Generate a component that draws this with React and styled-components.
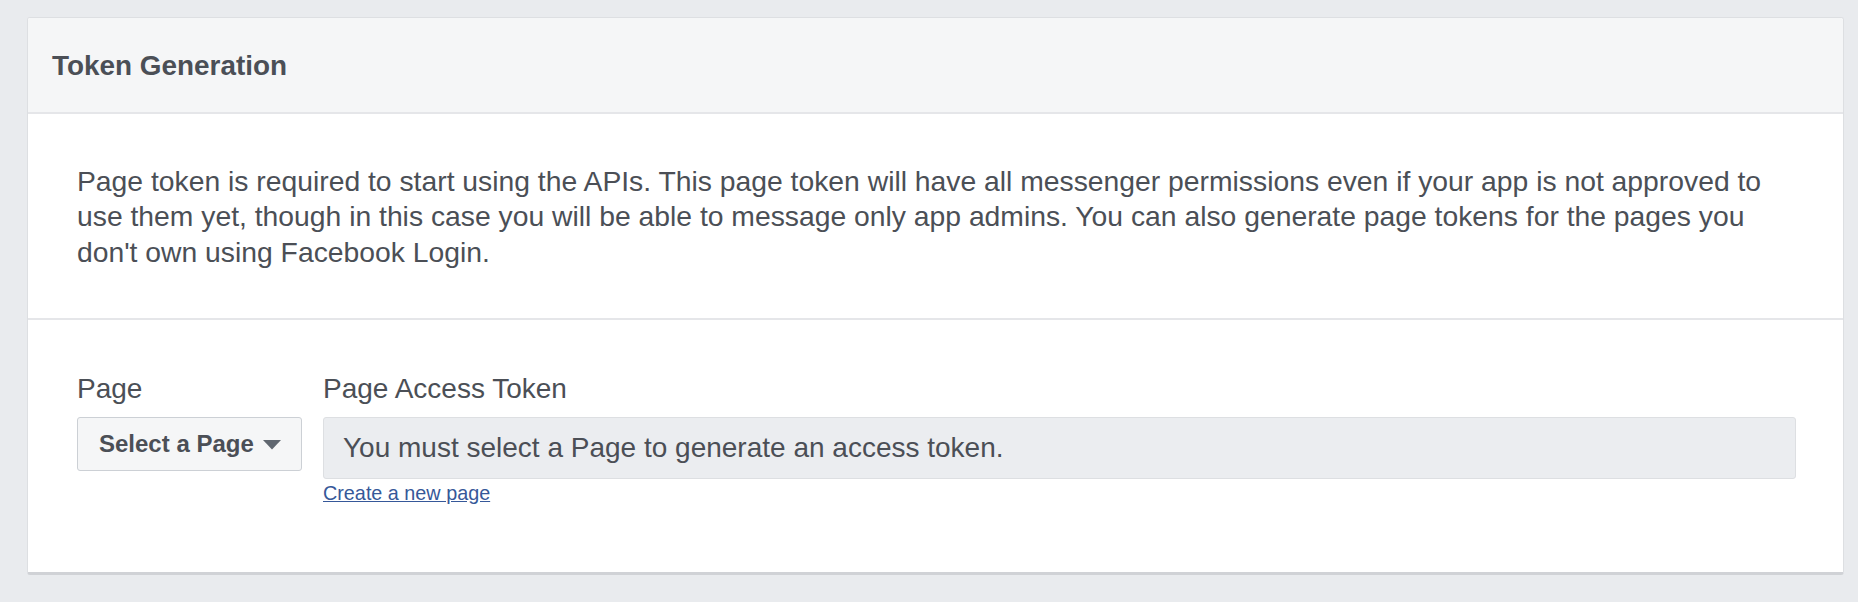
import React from "react";
import styled, { createGlobalStyle } from "styled-components";

const GlobalStyle = createGlobalStyle`
    html, body {
        margin: 0;
        padding: 0;
        background-color: #e9ebee;
        font-family: "Liberation Sans", Helvetica, Arial, sans-serif;
        color: #4b4f56;
    }
`;

const PageWrapper = styled.div`
    padding: 17px 14px 29px 27px;
    min-height: 100vh;
    box-sizing: border-box;
`;

const Card = styled.div`
    background-color: #ffffff;
    border: 1px solid #dddfe2;
    border-bottom: 3px solid #d0d2d6;
    border-radius: 3px;
    overflow: hidden;
`;

const CardHeader = styled.div`
    height: 94px;
    display: flex;
    align-items: center;
    padding: 0 24px;
    background-color: #f5f6f7;
    border-bottom: 2px solid #e5e6e9;
`;

const HeaderTitle = styled.div`
    font-size: 27.9px;
    font-weight: bold;
    color: #4b4f56;
    line-height: 34px;
    padding-top: 1px;
`;

const Section = styled.div`
    padding: ${(p) => p.$pad};
    border-bottom: ${(p) => (p.$divider ? "2px solid #e5e6e9" : "none")};
`;

const Description = styled.p`
    margin: 0;
    font-size: 28.3px;
    line-height: 35.5px;
    color: #4b4f56;
`;

const FieldRow = styled.div`
    display: flex;
    gap: 21px;
    align-items: flex-start;
`;

const Field = styled.div`
    display: flex;
    flex-direction: column;
    flex: ${(p) => (p.$grow ? 1 : "0 0 auto")};
    min-width: 0;
`;

const FieldLabel = styled.div`
    font-size: 28px;
    line-height: 34px;
    margin-bottom: 11px;
    color: #4b4f56;
`;

const SelectButton = styled.button`
    height: 54px;
    width: 225px;
    box-sizing: border-box;
    display: flex;
    align-items: center;
    justify-content: space-between;
    padding: 0 20px 0 21px;
    background-color: #f5f6f7;
    border: 1px solid #ccd0d5;
    border-radius: 3px;
    font-family: inherit;
    font-size: 24px;
    font-weight: bold;
    color: #4b4f56;
    cursor: pointer;
`;

const Caret = styled.svg`
    width: 18px;
    height: 10px;
    flex: none;
    margin-top: 1px;
`;

const TokenBox = styled.div`
    height: 62px;
    box-sizing: border-box;
    display: flex;
    align-items: center;
    padding: 0 19px;
    background-color: #ebedf0;
    border: 1px solid #dddfe2;
    border-radius: 3px;
    font-size: 28px;
    color: #4b4f56;
    white-space: nowrap;
    overflow: hidden;
`;

const CreateLink = styled.a`
    margin-top: 3px;
    font-size: 19.8px;
    line-height: 22px;
    color: #365899;
    text-decoration: underline;
    align-self: flex-start;
    cursor: pointer;
`;

const App = () => {
    return (
        <PageWrapper>
            <GlobalStyle />
            <Card>
                <CardHeader>
                    <HeaderTitle>Token Generation</HeaderTitle>
                </CardHeader>
                <Section $pad="49.5px 49px 48px 49px" $divider>
                    <Description>
                        Page token is required to start using the APIs. This page token will have all
                        messenger permissions even if your app is not approved to use them yet, though
                        in this case you will be able to message only app admins. You can also generate
                        page tokens for the pages you don't own using Facebook Login.
                    </Description>
                </Section>
                <Section $pad="52px 47px 68px 49px">
                    <FieldRow>
                        <Field>
                            <FieldLabel>Page</FieldLabel>
                            <SelectButton>
                                Select a Page
                                <Caret viewBox="0 0 18 10">
                                    <path d="M0 0 H18 L9 9.5 Z" fill="#606770" />
                                </Caret>
                            </SelectButton>
                        </Field>
                        <Field $grow>
                            <FieldLabel>Page Access Token</FieldLabel>
                            <TokenBox>You must select a Page to generate an access token.</TokenBox>
                            <CreateLink>Create a new page</CreateLink>
                        </Field>
                    </FieldRow>
                </Section>
            </Card>
        </PageWrapper>
    );
};

export default App;
